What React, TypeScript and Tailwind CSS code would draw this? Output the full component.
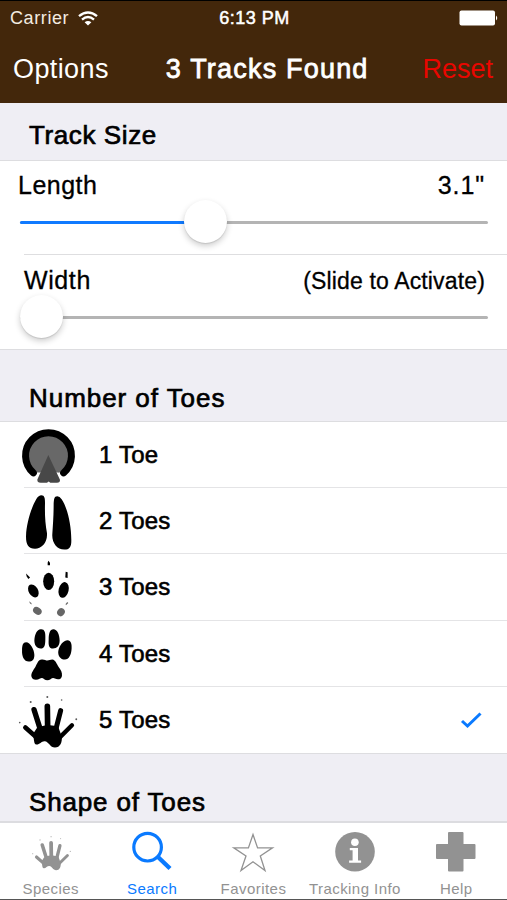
import { useState } from 'react';
import type { ReactNode } from 'react';

function HandShape() {
  return (
    <>
      <g stroke="currentColor" strokeLinecap="round" fill="none">
        <path d="M46 322 L80 352" strokeWidth="14" />
        <path d="M72 268 L91 328" strokeWidth="16" />
        <path d="M112 258 L113 325" strokeWidth="17" />
        <path d="M152 271 L137 330" strokeWidth="15" />
        <path d="M186 315 L148 353" strokeWidth="13" />
      </g>
      <path
        d="M80 324 Q96 316 108 315 L120 315 Q132 316 145 320 L155 348 C158 366 150 382 135 382 C120 382 117 364 104 363 C95 362 88 374 79 373 C70 372 74 359 68 343 Z"
        fill="currentColor"
      />
      <g fill="currentColor" opacity="0.65">
        <circle cx="29" cy="307" r="2.5" />
        <circle cx="62" cy="245" r="3" />
        <circle cx="112" cy="230" r="3" />
        <circle cx="155" cy="239" r="2.5" />
        <circle cx="199" cy="297" r="2.8" />
      </g>
    </>
  );
}

const toes: { label: string; viewBox: string; icon: ReactNode }[] = [
  {
    label: '1 Toe',
    viewBox: '0 3 225 199',
    icon: (
      <>
        <circle cx="115.5" cy="103" r="62" fill="#686868" />
        <path d="M84 155 L146 155 L152 190 L80 190 Z" fill="#fff" />
        <path d="M70 156 A69 69 0 1 1 161 156" fill="none" stroke="#000" strokeWidth="21" strokeLinecap="round" />
        <path d="M115 102 L150 177 Q151 186 141 186 L121 186 L116 182 L111 186 L92 186 Q81 186 82 176 Z" fill="#484848" />
      </>
    ),
  },
  {
    label: '2 Toes',
    viewBox: '0 202 225 199',
    icon: (
      <>
        <path d="M94 224 C104 224 105 234 105 247 C104 285 106 310 111 338 C113 367 94 385 75 385 C54 385 47 370 48 345 C49 310 63 262 79 235 Q86 224 94 224 Z" />
        <path d="M142 227 C132 227 132 237 131 250 C131 285 129 310 127 340 C125 365 140 387 163 387 C180 387 185 378 184 355 C184 315 173 262 155 236 Q149 227 142 227 Z" />
      </>
    ),
  },
  {
    label: '3 Toes',
    viewBox: '0 5 225 199',
    icon: (
      <>
        <ellipse cx="116" cy="87" rx="16.5" ry="26" />
        <ellipse cx="70" cy="116" rx="14" ry="21" transform="rotate(-30 70 116)" />
        <ellipse cx="161" cy="113" rx="15" ry="24" transform="rotate(13 161 113)" />
        <path d="M115 25 L120 31 L120 39 L113 39 L113 31 Z" />
        <path d="M48 64 L60 76 L55 80 L50 73 Z" />
        <path d="M167 58 L173 60 L173 77 L166 76 Z" />
        <g fill="#666">
          <ellipse cx="82" cy="176" rx="14" ry="10.5" transform="rotate(35 82 176)" />
          <ellipse cx="153" cy="180" rx="11" ry="12.5" transform="rotate(35 153 180)" />
          <path d="M57 147 L64 152 L65 157 L60 154 Z" />
          <path d="M172 149 L175 152 L168 159 L167 155 Z" />
        </g>
      </>
    ),
  },
  {
    label: '4 Toes',
    viewBox: '0 1 225 199',
    icon: (
      <>
        <path d="M92 26 C104 25 107 35 106 55 C106 75 103 84 92 84 C79 84 73 73 73 60 C74 40 81 27 92 26 Z" />
        <path d="M130 26 C142 26 149 43 149 60 C149 76 141 84 129 84 C117 83 115 74 116 57 C116 37 120 26 130 26 Z" />
        <path d="M48 65 C61 65 73 88 73 103 C73 117 67 123 56 123 C42 123 35 107 36 89 C36 74 39 65 48 65 Z" />
        <path d="M173 59 C183 59 186 70 185 84 C184 103 177 117 165 117 C151 117 143 104 145 91 C148 75 160 59 173 59 Z" />
        <path d="M95 117 C103 116 107 120 112 120 C118 120 120 117 127 117 C137 118 140 131 146 139 C153 148 157 156 156 166 C154 178 142 178 135 174 C126 168 122 179 112 179 C102 179 99 168 90 174 C80 180 66 179 64 167 C63 157 71 147 76 139 C82 129 84 118 95 117 Z" />
      </>
    ),
  },
  { label: '5 Toes', viewBox: '0 200 225 199', icon: <HandShape /> },
];

const tabs: { label: string; icon: ReactNode }[] = [
  {
    label: 'Species',
    icon: (
      <svg x="5.2" y="6" width="50" height="44" viewBox="0 200 225 199">
        <HandShape />
      </svg>
    ),
  },
  {
    label: 'Search',
    icon: (
      <g fill="none" stroke="currentColor">
        <circle cx="25.6" cy="23.2" r="13.8" strokeWidth="3.2" />
        <path d="M36 33 L48 44.5" strokeWidth="4.4" />
      </g>
    ),
  },
  {
    label: 'Favorites',
    icon: (
      <path
        d="M30 10.5 L34.6 23.9 L49.5 23.9 L37.3 32 L42 46.5 L30 37.8 L18 46.5 L23 32 L10.8 23.9 L25.4 23.9 Z"
        fill="none"
        stroke="currentColor"
        strokeWidth="1.3"
      />
    ),
  },
  {
    label: 'Tracking Info',
    icon: (
      <>
        <circle cx="30" cy="27.7" r="19.8" fill="currentColor" />
        <circle cx="29.9" cy="18.2" r="3.8" fill="#fff" />
        <path d="M24.8 24 H33 V36.4 H36.1 V38.7 H24.1 V36.4 H27.6 V26.3 H24.8 Z" fill="#fff" />
      </>
    ),
  },
  {
    label: 'Help',
    icon: (
      <path
        d="M23 8 H36.5 Q37.5 8 37.5 9 V20 H48.5 Q49.5 20 49.5 21 V34 Q49.5 35 48.5 35 H37.5 V46.5 Q37.5 47.5 36.5 47.5 H23 Q22 47.5 22 46.5 V35 H11 Q10 35 10 34 V21 Q10 20 11 20 H22 V9 Q22 8 23 8 Z"
        fill="currentColor"
      />
    ),
  },
];

function SectionTitle({ children, className }: { children: string; className: string }) {
  return (
    <div className={`flex shrink-0 items-end bg-[#efeef4] pl-[29px] ${className}`}>
      <h2 className="text-[26px] leading-[30px] [-webkit-text-stroke:0.7px_#000]">{children}</h2>
    </div>
  );
}

function Slider({ value }: { value: number }) {
  return (
    <div className="relative ml-5 mr-[19px] h-[3px] rounded-full bg-[#b4b4b4]">
      <div className="h-full rounded-full bg-[#107aff]" style={{ width: `${value}%` }} />
      <div
        className="absolute -top-[21px] size-[43px] rounded-full bg-white shadow-[0_3px_6px_rgba(0,0,0,0.2),0_1px_1px_rgba(0,0,0,0.1)]"
        style={{ left: `calc((100% - 43px) * ${value / 100})` }}
      />
    </div>
  );
}

export default function App() {
  const [selected, setSelected] = useState('5 Toes');

  return (
    <div className="flex h-[900px] w-[507px] flex-col overflow-hidden border-b border-t border-b-[#555] border-t-black bg-white font-['Liberation_Sans',Arial,sans-serif] text-black">
      <header className="h-[102px] shrink-0 bg-[#43270b] text-white">
        <div className="grid h-[34px] grid-cols-3 items-center pl-[10px] pr-[8px] text-[18px]">
          <div className="flex items-center gap-[9px]">
            <span className="tracking-[0.6px] text-[#f4ece2]">Carrier</span>
            <svg width="20" height="15" viewBox="0 0 20 15" fill="none" stroke="#fff" strokeWidth="2.4">
              <path d="M1 5.2 Q10 -2.4 19 5.2" />
              <path d="M4 8.6 Q10 3.6 16 8.6" />
              <path d="M6.6 11.3 Q10 8.5 13.4 11.3 L10 14.6 Z" fill="#fff" stroke="none" />
            </svg>
          </div>
          <span className="text-center tracking-[0.5px] [-webkit-text-stroke:0.5px_#fff]">6:13 PM</span>
          <svg className="justify-self-end" width="40" height="16" viewBox="0 0 40 16" fill="#fff">
            <rect x="0.5" y="0.5" width="35.5" height="15" rx="2" />
            <path d="M37 5.5 Q39.5 8 37 10.5 Z" />
          </svg>
        </div>
        <div className="flex h-[66px] items-center justify-between pl-[13px] pr-[14px] pt-[2px] text-[27px]">
          <button className="tracking-[0.4px]">Options</button>
          <h1 className="pl-[3px] tracking-[1.2px] [-webkit-text-stroke:0.8px_#fff]">3 Tracks Found</h1>
          <button className="text-[#e90600]">Reset</button>
        </div>
      </header>

      <SectionTitle className="h-[58px] border-b border-[#dddde0] pb-[10px] tracking-[0.6px]">Track Size</SectionTitle>
      <section className="h-[188px] shrink-0">
        <div className="h-[93px]">
          <div className="flex h-[60px] items-start justify-between pl-[18px] pr-[22px] pt-[9px] text-[25px] leading-[30px] [-webkit-text-stroke:0.3px_#000]">
            <span className="tracking-[0.5px]">Length</span>
            <span className="tracking-[0.9px]">3.1"</span>
          </div>
          <Slider value={38.5} />
        </div>
        <div className="ml-6 h-px bg-[#dedee0]" />
        <div className="h-[94px]">
          <div className="flex h-[61px] items-start justify-between pl-[24px] pr-[22px] pt-[10px] text-[25px] leading-[30px] [-webkit-text-stroke:0.3px_#000]">
            <span className="tracking-[0.6px]">Width</span>
            <span className="pt-px text-[23px] tracking-[0.15px]">(Slide to Activate)</span>
          </div>
          <Slider value={0} />
        </div>
      </section>

      <SectionTitle className="h-[73px] border-b border-t border-[#dddde0] pb-[8px] tracking-[0.95px]">
        Number of Toes
      </SectionTitle>
      <ul className="shrink-0">
        {toes.map((toe, i) => (
          <li key={toe.label} className="h-[66.2px]">
            <button
              className="flex h-full w-full items-center pl-[10px] pr-[25px] text-left"
              onClick={() => setSelected(toe.label)}
            >
              <svg width="75" height="66.2" viewBox={toe.viewBox}>
                {toe.icon}
              </svg>
              <span className="flex-1 pl-[14px] text-[24px] tracking-[0.2px] [-webkit-text-stroke:0.6px_#000]">
                {toe.label}
              </span>
              {selected === toe.label && (
                <svg width="22" height="18" viewBox="0 0 22 18" fill="none" stroke="#0a7aff" strokeWidth="3">
                  <path d="M2 10 L7.5 15 L20.5 2.5" />
                </svg>
              )}
            </button>
            {i < toes.length - 1 && <div className="-mt-px ml-6 h-px bg-[#e4e4e6]" />}
          </li>
        ))}
      </ul>

      <SectionTitle className="h-[68px] border-t border-[#dddde0] pb-[4px] tracking-[0.85px]">Shape of Toes</SectionTitle>
      <nav className="grid h-[78px] shrink-0 grid-cols-5 border-t-2 border-[#dcdce0] bg-white">
        {tabs.map((tab) => (
          <button
            key={tab.label}
            className={`flex flex-col items-center pt-px ${tab.label === 'Search' ? 'text-[#0a7aff]' : 'text-[#929292]'}`}
          >
            <svg width="60" height="52" viewBox="0 0 60 52">
              {tab.icon}
            </svg>
            <span className="mt-[4px] whitespace-nowrap text-[15px] leading-[18px] tracking-[0.45px]">{tab.label}</span>
          </button>
        ))}
      </nav>
    </div>
  );
}
